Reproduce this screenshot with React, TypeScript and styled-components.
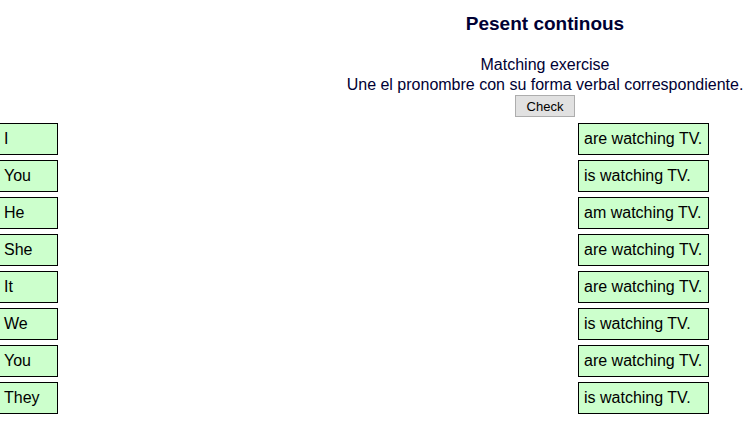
import React from "react";
import styled, { createGlobalStyle } from "styled-components";

const Global = createGlobalStyle`
  html, body { margin: 0; padding: 0; background: #ffffff; }
  body { font-family: "Liberation Sans", Arial, sans-serif; color: #000033; }
`;

const Page = styled.div`
  width: 753px;
  height: 434px;
  overflow: hidden;
`;

const Header = styled.header`
  padding-left: 337px;
  padding-top: 13px;
  display: flex;
  flex-direction: column;
  align-items: center;
  text-align: center;
`;

const Title = styled.h1`
  margin: 0;
  font-size: 19px;
  line-height: 22px;
  font-weight: bold;
  color: #000033;
`;

const Instructions = styled.p`
  margin: 20px 0 0;
  font-size: 16px;
  line-height: 20px;
  color: #000033;
`;

const CheckButton = styled.button`
  margin-top: 0;
  width: 60px;
  height: 22px;
  padding: 0;
  font-family: "Liberation Sans", Arial, sans-serif;
  font-size: 13px;
  color: #000000;
  background: #e1e1e1;
  border: 1px solid #adadad;
  border-radius: 0;
`;

const Board = styled.div`
  margin-top: 6px;
  display: flex;
  justify-content: space-between;
  padding-right: 44px;
`;

const Column = styled.div<{ $offset: number }>`
  display: flex;
  flex-direction: column;
  gap: 5px;
  margin-left: ${(p) => p.$offset}px;
`;

const Card = styled.div<{ $width: number }>`
  box-sizing: border-box;
  width: ${(p) => p.$width}px;
  height: 32px;
  line-height: 30px;
  padding-left: 5px;
  border: 1px solid #000000;
  background: #ccffcc;
  color: #000000;
  font-size: 16px;
  white-space: nowrap;
`;

const pronouns = ["I", "You", "He", "She", "It", "We", "You", "They"];
const verbs = [
  "are watching TV.",
  "is watching TV.",
  "am watching TV.",
  "are watching TV.",
  "are watching TV.",
  "is watching TV.",
  "are watching TV.",
  "is watching TV.",
];

export default function App() {
  return (
    <Page>
      <Global />
      <Header>
        <Title>Pesent continous</Title>
        <Instructions>
          Matching exercise
          <br />
          Une el pronombre con su forma verbal correspondiente.
        </Instructions>
        <CheckButton>Check</CheckButton>
      </Header>
      <Board>
        <Column $offset={-2}>
          {pronouns.map((p, i) => (
            <Card key={i} $width={60}>
              {p}
            </Card>
          ))}
        </Column>
        <Column $offset={0}>
          {verbs.map((v, i) => (
            <Card key={i} $width={131}>
              {v}
            </Card>
          ))}
        </Column>
      </Board>
    </Page>
  );
}
